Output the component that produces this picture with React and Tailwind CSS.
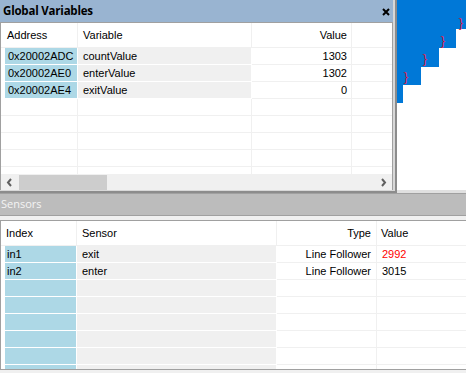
import React from "react";

const gvRows = [
  { addr: "0x20002ADC", name: "countValue", value: "1303" },
  { addr: "0x20002AE0", name: "enterValue", value: "1302" },
  { addr: "0x20002AE4", name: "exitValue", value: "0" },
];

const sensorRows = [
  { index: "in1", sensor: "exit", type: "Line Follower", value: "2992", alert: true },
  { index: "in2", sensor: "enter", type: "Line Follower", value: "3015" },
];

const Chevron = ({ left }) => (
  <svg width="7" height="9" viewBox="0 0 7 9">
    <polyline
      points={left ? "5,1 2,4.5 5,8" : "2,1 5,4.5 2,8"}
      fill="none"
      stroke="#606060"
      strokeWidth="2"
    />
  </svg>
);

const Brace = () => (
  <span className="text-[13px] leading-none text-[#d81b4a] font-['Liberation_Sans',sans-serif]">
    {"}"}
  </span>
);

const GvRow = ({ row }) => {
  const filled = !!row;
  return (
    <div className="flex h-[17px] shrink-0">
      <div
        className={`w-[77px] flex pl-[4px] border-r border-b ${
          filled ? "border-white" : "border-[#f0f0f0]"
        }`}
      >
        <div
          className={`flex-1 flex items-center pl-[3px] ${filled ? "bg-[#add8e6]" : ""}`}
        >
          {row?.addr}
        </div>
      </div>
      <div
        className={`w-[174px] flex items-center pl-[5px] border-r border-b ${
          filled ? "bg-[#f0f0f0] border-white" : "border-[#f0f0f0]"
        }`}
      >
        {row?.name}
      </div>
      <div className="w-[100px] flex items-center justify-end pr-[4px] border-r border-b border-[#f0f0f0]">
        {row?.value}
      </div>
      <div className="flex-1 border-b border-[#f0f0f0]" />
    </div>
  );
};

const SensorRow = ({ row }) => (
  <div className="flex h-[17px] shrink-0">
    <div className="w-[76px] flex pl-[4px] border-r border-b border-white">
      <div className="flex-1 flex items-center pl-[2px] bg-[#add8e6]">{row?.index}</div>
    </div>
    <div className="w-[200px] flex items-center pl-[5px] bg-[#f0f0f0] border-r border-b border-white">
      {row?.sensor}
    </div>
    <div className="w-[100px] flex items-center justify-end pr-[5px] border-r border-b border-[#f0f0f0]">
      {row?.type}
    </div>
    <div
      className={`flex-1 flex items-center pl-[5px] border-b border-[#f0f0f0] ${
        row?.alert ? "text-[#ff0000]" : ""
      }`}
    >
      {row?.value}
    </div>
  </div>
);

export default function App() {
  const gvEmpty = Array.from({ length: 5 });
  const sensorEmpty = Array.from({ length: 6 });

  return (
    <div className="w-[466px] h-[373px] overflow-hidden bg-[#f0f0f0] text-[11px] text-black font-['Liberation_Sans',Arial,sans-serif] flex flex-col">
      <div className="flex h-[193px] shrink-0">
        {/* Global Variables tool window */}
        <div className="w-[397px] h-full border-r-2 border-b-2 border-[#8c8c8c]">
          <div className="h-full border-r-2 border-b border-[#d8d8d8] flex flex-col">
            <div className="h-[23px] shrink-0 bg-[#99b4d1] border-b border-[#a0a0a0] flex items-center justify-between pl-[3px] pr-[3px]">
              <span className="font-['Open_Sans',sans-serif] font-bold text-[11.5px] tracking-[-0.2px]">
                Global Variables
              </span>
              <svg width="8" height="8" viewBox="0 0 8 8" className="mt-[2px]">
                <path d="M1 1 L7 7 M7 1 L1 7" stroke="#000" strokeWidth="2" />
              </svg>
            </div>
            <div className="flex-1 flex flex-col bg-white border-l border-r border-[#a0a0a0]">
              <div className="h-[151px] flex flex-col overflow-hidden">
                <div className="flex h-[25px] shrink-0">
                  <div className="w-[77px] flex items-center pl-[6px] border-r border-b border-[#f0f0f0]">
                    Address
                  </div>
                  <div className="w-[174px] flex items-center pl-[5px] border-r border-b border-[#f0f0f0]">
                    Variable
                  </div>
                  <div className="w-[100px] flex items-center justify-end pr-[4px] border-r border-b border-[#f0f0f0]">
                    Value
                  </div>
                  <div className="flex-1 border-b border-[#f0f0f0]" />
                </div>
                {gvRows.map((r) => (
                  <GvRow key={r.addr} row={r} />
                ))}
                {gvEmpty.map((_, i) => (
                  <GvRow key={i} />
                ))}
              </div>
              <div className="h-[16px] bg-[#f0f0f0] flex items-center">
                <div className="w-[17px] h-full flex items-center justify-center">
                  <Chevron left />
                </div>
                <div className="ml-[1px] w-[88px] h-[15px] bg-[#cdcdcd]" />
                <div className="flex-1" />
                <div className="w-[17px] h-full flex items-center justify-center">
                  <Chevron />
                </div>
              </div>
            </div>
          </div>
        </div>

        {/* editor selection behind */}
        <div className="flex-1 h-full bg-white border-b-[3px] border-[#e0e0e0] flex flex-col">
          <div className="h-[29px] w-full bg-[#0078d7] flex justify-end items-end pr-[3px]">
            <Brace />
          </div>
          <div className="h-[19px] w-[59px] bg-[#0078d7] flex justify-end items-end pr-[11px] pb-[1px]">
            <Brace />
          </div>
          <div className="h-[19px] w-[42px] bg-[#0078d7] flex justify-end items-end pr-[12px] pb-[2px]">
            <Brace />
          </div>
          <div className="h-[18px] w-[24px] bg-[#0078d7] flex justify-end items-end pr-[13px] pb-[2px]">
            <Brace />
          </div>
          <div className="h-[18px] w-[6px] bg-[#0078d7]" />
        </div>
      </div>

      {/* Sensors panel */}
      <div className="h-[23px] shrink-0 bg-[#bcbcbc] border-t border-b border-[#a0a0a0] flex items-center pl-[1px]">
        <span className="font-['Open_Sans',sans-serif] text-[11px] text-[#f4f4f4]">Sensors</span>
      </div>
      <div className="h-[4px] shrink-0" />
      <div className="h-[150px] shrink-0 bg-white border-t border-b border-l border-[#a0a0a0] flex flex-col overflow-hidden">
        <div className="flex h-[25px] shrink-0">
          <div className="w-[76px] flex items-center pl-[5px] border-r border-b border-[#f0f0f0]">
            Index
          </div>
          <div className="w-[200px] flex items-center pl-[5px] border-r border-b border-[#f0f0f0]">
            Sensor
          </div>
          <div className="w-[100px] flex items-center justify-end pr-[5px] border-r border-b border-[#f0f0f0]">
            Type
          </div>
          <div className="flex-1 flex items-center pl-[4px] border-b border-[#f0f0f0]">Value</div>
        </div>
        {sensorRows.map((r) => (
          <SensorRow key={r.index} row={r} />
        ))}
        {sensorEmpty.map((_, i) => (
          <SensorRow key={i} />
        ))}
      </div>
    </div>
  );
}
